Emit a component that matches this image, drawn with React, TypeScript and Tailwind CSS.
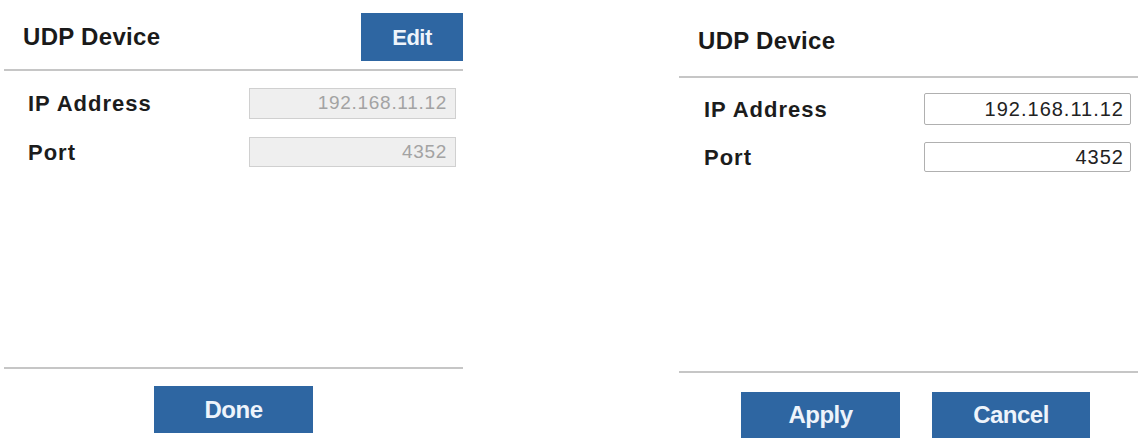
import React from "react";

const font = { fontFamily: '"Liberation Sans", Arial, sans-serif' };

type Field = { label: string; value: string };

const fields: Field[] = [
  { label: "IP Address", value: "192.168.11.12" },
  { label: "Port", value: "4352" },
];

function BlueButton({ label, className }: { label: string; className: string }) {
  return (
    <button
      className={
        "bg-[#2e66a2] text-[#eef4fb] font-bold tracking-[-0.5px] flex items-center justify-center " +
        className
      }
    >
      {label}
    </button>
  );
}

function Row({
  field,
  editable,
  className,
}: {
  field: Field;
  editable: boolean;
  className: string;
}) {
  return (
    <div className={"flex items-center justify-between " + className}>
      <span className="font-bold text-[22px] tracking-[1px] text-[#1c1c1c]">
        {field.label}
      </span>
      {editable ? (
        <div className="w-[207px] h-full bg-white border border-[#b0b0b0] rounded-[2px] flex items-center justify-end pr-[6px] text-[20px] tracking-[1px] text-[#222]">
          {field.value}
        </div>
      ) : (
        <div className="w-[207px] h-full bg-[#efefef] border border-[#d0d0d0] flex items-center justify-end pr-[8px] text-[19px] tracking-[0.7px] text-[#a3a3a3]">
          {field.value}
        </div>
      )}
    </div>
  );
}

export default function App() {
  return (
    <div className="w-[1142px] h-[442px] bg-white flex justify-between px-1" style={font}>
      {/* read-only view */}
      <div className="w-[459px] flex flex-col">
        <div className="h-[69px] pt-[5px] flex items-center justify-between">
          <span className="pl-[19px] font-bold text-[24px] tracking-[0.3px] text-[#1a1a1a]">UDP Device</span>
          <BlueButton label="Edit" className="w-[102px] h-[48px] text-[22px]" />
        </div>
        <div className="h-[2px] bg-[#c6c6c6]" />
        <div className="pl-[24px] pr-[7px] pt-[17px] flex flex-col gap-[18px]">
          <Row field={fields[0]} editable={false} className="h-[31px]" />
          <Row field={fields[1]} editable={false} className="h-[30px]" />
        </div>
        <div className="h-[200px]" />
        <div className="h-[2px] bg-[#c6c6c6]" />
        <div className="pt-[17px] flex justify-center">
          <BlueButton label="Done" className="w-[159px] h-[47px] text-[24px]" />
        </div>
      </div>

      {/* edit view */}
      <div className="w-[459px] flex flex-col">
        <div className="h-[76px] pt-[6px] flex items-center">
          <span className="pl-[19px] font-bold text-[24px] tracking-[0.3px] text-[#1a1a1a]">UDP Device</span>
        </div>
        <div className="h-[2px] bg-[#c6c6c6]" />
        <div className="pl-[25px] pr-[7px] pt-[15px] flex flex-col gap-[17px]">
          <Row field={fields[0]} editable className="h-[32px]" />
          <Row field={fields[1]} editable className="h-[30px]" />
        </div>
        <div className="h-[199px]" />
        <div className="h-[2px] bg-[#c6c6c6]" />
        <div className="pt-[19px] pl-[62px] flex gap-[32px]">
          <BlueButton label="Apply" className="w-[159px] h-[46px] text-[24px]" />
          <BlueButton label="Cancel" className="w-[158px] h-[46px] text-[24px]" />
        </div>
      </div>
    </div>
  );
}
